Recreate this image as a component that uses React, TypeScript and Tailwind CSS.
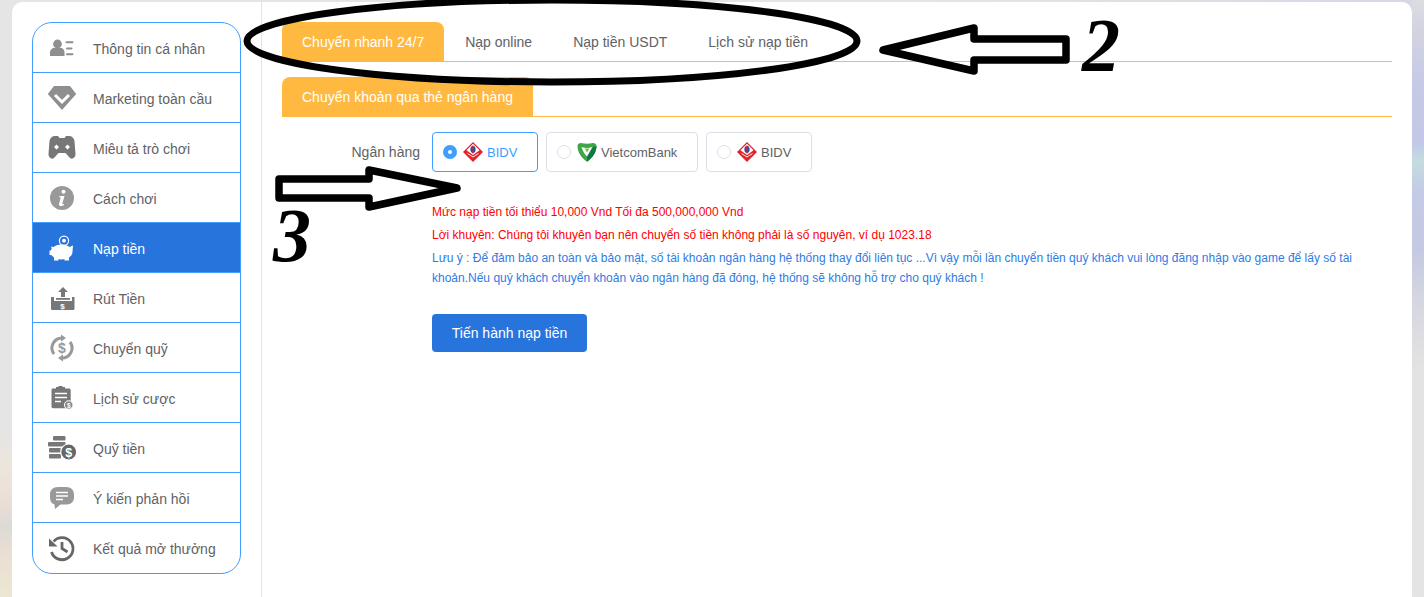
import React from 'react';

const menu = [
  { label: 'Thông tin cá nhân', icon: UserListIcon },
  { label: 'Marketing toàn cầu', icon: DiamondIcon },
  { label: 'Miêu tả trò chơi', icon: GamepadIcon },
  { label: 'Cách chơi', icon: InfoIcon },
  { label: 'Nạp tiền', icon: PiggyIcon, active: true },
  { label: 'Rút Tiền', icon: WithdrawIcon },
  { label: 'Chuyển quỹ', icon: TransferIcon },
  { label: 'Lịch sử cược', icon: ClipboardIcon },
  { label: 'Quỹ tiền', icon: CoinsIcon },
  { label: 'Ý kiến phản hồi', icon: ChatIcon },
  { label: 'Kết quả mở thưởng', icon: HistoryIcon },
];

const tabs = ['Chuyển nhanh 24/7', 'Nạp online', 'Nạp tiền USDT', 'Lịch sử nạp tiền'];

function UserListIcon() {
  return (
    <svg width="32" height="32" viewBox="0 0 32 32" fill="#8f8f8f">
      <circle cx="11.5" cy="12" r="4.4" />
      <path d="M4 24v-3.5c0-3 2.5-4.8 5-4.8h5c2.500 0 4.500 1.800 4.500 4.800V24z" />
      <rect x="19.500" y="9.300" width="8" height="2" rx="1" />
      <rect x="20" y="15.500" width="6.500" height="2" rx="1" />
      <rect x="20" y="21.300" width="7.500" height="2" rx="1" />
    </svg>
  );
}

function DiamondIcon() {
  return (
    <svg width="32" height="32" viewBox="0 0 32 32">
      <path d="M8 4h16l6.200 8L16 28 1.800 12z" fill="#8f8f8f" />
      <path d="M9 13l7 7 7-7" fill="none" stroke="#fff" strokeWidth="3" />
    </svg>
  );
}

function GamepadIcon() {
  return (
    <svg width="32" height="32" viewBox="0 0 32 32">
      <path
        d="M9 4h3l1.500 2h5L20 4h3c3 0 5 2 5.500 5l1 13c.2 3-3 6-5.500 4l-4.500-5h-7L8 26c-2.500 2-5.700-1-5.500-4l1-13C4 6 6 4 9 4z"
        fill="#777"
      />
      <path d="M10.500 12.500l2.500 2.500-2.500 2.500L8 15zM21.500 12.500l2.500 2.500-2.500 2.500-2.500-2.500z" fill="#fff" />
    </svg>
  );
}

function InfoIcon() {
  return (
    <svg width="32" height="32" viewBox="0 0 32 32">
      <circle cx="16" cy="16" r="12" fill="#999" />
      <circle cx="17.500" cy="9.800" r="2" fill="#fff" />
      <path d="M13.500 14h5l-2.200 7.500c-.2.700.4.900 1.800.3l-.3 1.500c-2 1.200-5.300 1.200-4.800-1.300l1.600-6c.1-.6-.3-.7-1.300-.6z" fill="#fff" />
    </svg>
  );
}

function PiggyIcon() {
  return (
    <svg width="32" height="32" viewBox="0 0 32 32" fill="#fff">
      <circle cx="18" cy="8.700" r="4.600" fill="none" stroke="#fff" strokeWidth="1.200" />
      <circle cx="18" cy="8.700" r="1.900" />
      <ellipse cx="15.500" cy="20" rx="11" ry="7.500" />
      <path d="M5 14.500l5 1-3 5zM21 16l6-2.500-.5 6zM8 24h4.500v4.500H8zM18.500 24H23v4.500h-4.500zM3.500 18.500h4v4.500h-4z" />
    </svg>
  );
}

function WithdrawIcon() {
  return (
    <svg width="32" height="32" viewBox="0 0 32 32" fill="#777">
      <path d="M17 5l5 5h-3v5h-4v-5h-3z" />
      <rect x="10" y="16" width="14" height="1.800" />
      <path d="M5 15h3v4h18v-4h2.500v11.500c0 1-.7 1.500-1.500 1.500H6.500c-.8 0-1.500-.5-1.500-1.500z" />
      <text x="16.500" y="27" textAnchor="middle" fontSize="8" fontWeight="700" fill="#fff" fontFamily="Liberation Sans, sans-serif">$</text>
    </svg>
  );
}

function TransferIcon() {
  return (
    <svg width="32" height="32" viewBox="0 0 32 32">
      <path d="M8 22A10 10 0 0 1 16 6M24 10A10 10 0 0 1 16 26" fill="none" stroke="#999" strokeWidth="3" />
      <path d="M15 2.500L20 6l-5 3.500zM17 22.500L12 26l5 3.500z" fill="#999" />
      <text x="16" y="21" textAnchor="middle" fontSize="14" fontWeight="700" fill="#999" fontFamily="Liberation Sans, sans-serif">$</text>
    </svg>
  );
}

function ClipboardIcon() {
  return (
    <svg width="32" height="32" viewBox="0 0 32 32">
      <path d="M7 6.500h3V5h2.500V4h4v1H19v1.500h4c1 0 1.700.7 1.700 1.700V24.500c0 1-.7 1.700-1.700 1.700H7c-1 0-1.500-.7-1.500-1.700V8.200c0-1 .5-1.700 1.500-1.700z" fill="#777" />
      <path d="M9 11.500h12M9 15.500h12M9 19.500h6" stroke="#fff" strokeWidth="1.600" />
      <circle cx="22.700" cy="23" r="4.300" fill="#8a8a8a" stroke="#fff" strokeWidth="1" />
      <text x="22.700" y="25.500" textAnchor="middle" fontSize="6.500" fontWeight="700" fill="#fff" fontFamily="Liberation Sans, sans-serif">$</text>
    </svg>
  );
}

function CoinsIcon() {
  return (
    <svg width="32" height="32" viewBox="0 0 32 32">
      <rect x="7" y="4" width="12.500" height="4.500" rx="1" fill="#777" />
      <rect x="2" y="10" width="17.500" height="4.500" rx="1" fill="#777" />
      <rect x="3" y="16" width="12" height="4.500" rx="1" fill="#777" />
      <rect x="3" y="22" width="12" height="4.500" rx="1" fill="#777" />
      <circle cx="22.700" cy="20" r="8" fill="#666" stroke="#fff" strokeWidth="1.200" />
      <text x="22.700" y="24.500" textAnchor="middle" fontSize="12.500" fontWeight="700" fill="#fff" fontFamily="Liberation Sans, sans-serif">$</text>
    </svg>
  );
}

function ChatIcon() {
  return (
    <svg width="32" height="32" viewBox="0 0 32 32">
      <path d="M12 5h8c5 0 8 3 8 7.500v3c0 4-3 7-7 7h-6.500L9 27l-.6-4.700C5.500 21.500 4 19 4 15.500v-3C4 8 7 5 12 5z" fill="#999" />
      <path d="M10 10.500h12M10 14h12M10 17.500h7" stroke="#fff" strokeWidth="1.500" />
    </svg>
  );
}

function HistoryIcon() {
  return (
    <svg width="32" height="32" viewBox="0 0 32 32">
      <path d="M7.700 9.500A11 11 0 1 1 5.500 20" fill="none" stroke="#666" strokeWidth="2.800" />
      <path d="M3 6.500l8.500 8H3z" fill="#666" />
      <path d="M16 10v6.500l5.500 3.500" fill="none" stroke="#666" strokeWidth="2.800" />
    </svg>
  );
}

function BidvLogo() {
  return (
    <svg width="20" height="20" viewBox="0 0 20 20">
      <path d="M10 0l10 10-10 10L0 10z" fill="#e0242a" />
      <path d="M10 1.800l6.500 6.500L10 13 3.500 8.300z" fill="#fff" />
      <path d="M4.500 11.500L10 15l5.500-3.500" fill="none" stroke="#fff" strokeWidth="0.900" />
      <ellipse cx="10" cy="7.500" rx="2.600" ry="3.400" fill="#2a4da8" />
      <rect x="9.400" y="3.500" width="1.200" height="8" fill="#e0242a" />
    </svg>
  );
}

function VcbLogo() {
  return (
    <svg width="20" height="20" viewBox="0 0 20 20">
      <path d="M.5 4C.5 2 2.500.8 5 1.200c3.500.6 6.500.6 10 0C17.500.8 19.500 2 19.500 4c0 6-4 12-9.500 15.800C4.500 16 .5 10 .5 4z" fill="#3ea548" />
      <path d="M19.500 4c0 6-4 12-9.500 15.800V14l5-8.500z" fill="#0f7a45" />
      <path d="M4.500 5c3.500 1.200 7.500 1.200 11 0L10 14.500C7.500 12 5.500 8.500 4.500 5z" fill="#fff" />
      <path d="M7.500 6.300c1.700.3 3.300.3 5 0L10 10.500z" fill="#7cc242" />
    </svg>
  );
}

function BankOption({ name, logo, checked, width }: { name: string; logo: React.ReactNode; checked?: boolean; width: string }) {
  return (
    <div
      className={`flex h-10 items-center rounded border pl-[10px] ${width} ${
        checked ? 'border-[#409eff] text-[#409eff]' : 'border-[#dcdfe6] text-[#606266]'
      }`}
    >
      {checked ? (
        <span className="flex h-[14px] w-[14px] items-center justify-center rounded-full bg-[#409eff]">
          <span className="h-1 w-1 rounded-full bg-white" />
        </span>
      ) : (
        <span className="h-[14px] w-[14px] rounded-full border border-[#dcdfe6]" />
      )}
      <span className="ml-[6px]">{logo}</span>
      <span className="ml-1 text-[13px] leading-none">{name}</span>
    </div>
  );
}

export default function App() {
  return (
    <div className="relative flex h-[597px] overflow-hidden font-['Liberation_Sans',Arial,sans-serif]">
      <div className="w-3 shrink-0 bg-[linear-gradient(180deg,#e5e5e5_0%,#e5e5e5_72%,#ece6dc_78%,#eadfd6_84%,#dcdad6_88%,#eadfd4_93%,#ece6d2_100%)]" />
      <div className="flex min-w-0 flex-1 flex-col bg-[linear-gradient(90deg,#e5e5e5_0%,#e4e4e4_70%,#d6d8e4_100%)] pt-[2px]">
        <div className="flex flex-1 rounded-t-[10px] bg-white">
          <aside className="h-full w-[250px] shrink-0 border-r border-[#e4e4e4] pl-5 pt-5">
            <ul className="w-[209px] overflow-hidden rounded-[20px] border border-[#409eff]">
              {menu.map((item, i) => {
                const Icon = item.icon;
                return (
                  <li
                    key={item.label}
                    className={`flex h-[50px] items-center pl-[13px] text-sm ${i < menu.length - 1 ? 'border-b border-[#409eff]' : ''} ${
                      item.active ? 'bg-[#2874dd] text-white' : 'text-[#606266]'
                    }`}
                  >
                    <Icon />
                    <span className="ml-[15px] mt-[2px]">{item.label}</span>
                  </li>
                );
              })}
            </ul>
          </aside>

          <main className="min-w-0 flex-1 pl-5 pr-5 pt-5">
            <div className="flex h-10 gap-px border-b border-[#ffb941]">
              {tabs.map((tab, i) => (
                <div
                  key={tab}
                  className={`flex h-[39px] items-center rounded-t-lg px-5 text-sm ${
                    i === 0 ? 'bg-[#ffb941] text-white' : 'text-[#606266]'
                  }`}
                >
                  {tab}
                </div>
              ))}
            </div>

            <div className="mt-[15px] flex h-10 border-b border-[#ffb941]">
              <div className="flex h-[39px] items-center rounded-t-lg bg-[#ffb941] px-5 text-sm text-white">
                Chuyển khoản qua thẻ ngân hàng
              </div>
            </div>

            <div className="mt-[15px] flex items-center">
              <span className="w-[138px] text-right text-sm text-[#606266]">Ngân hàng</span>
              <div className="ml-3 flex gap-2">
                <BankOption name="BIDV" logo={<BidvLogo />} checked width="w-[106px]" />
                <BankOption name="VietcomBank" logo={<VcbLogo />} width="w-[152px]" />
                <BankOption name="BIDV" logo={<BidvLogo />} width="w-[106px]" />
              </div>
            </div>

            <div className="ml-[150px] mt-[30px] text-xs leading-5">
              <p className="text-[#ff0000]">Mức nạp tiền tối thiểu 10,000 Vnd Tối đa 500,000,000 Vnd</p>
              <p className="mt-[3px] text-[#ff0000]">Lời khuyên: Chúng tôi khuyên bạn nên chuyển số tiền không phải là số nguyên, ví dụ 1023.18</p>
              <p className="mt-[3px] text-[#2f7be4]">
                Lưu ý : Để đảm bảo an toàn và bảo mật, số tài khoản ngân hàng hệ thống thay đổi liên tục ...Vì vậy mỗi lần chuyển tiền quý khách vui lòng đăng nhập vào game để lấy số tài khoản.Nếu quý khách chuyển khoản vào ngân hàng đã đóng, hệ thống sẽ không hỗ trợ cho quý khách !
              </p>
              <button className="mt-[26px] flex h-[38px] w-[155px] items-center justify-center rounded bg-[#2874dd] text-sm text-white">
                Tiến hành nạp tiền
              </button>
            </div>
          </main>
        </div>
      </div>
      <div className="w-3 shrink-0 bg-[linear-gradient(180deg,#dcdce2_0%,#d2d2e0_6%,#c6cae6_14%,#c2c8e6_24%,#c4dce0_27%,#c4cbe6_32%,#c6c9e2_42%,#d4d6e0_50%,#dddde0_56%,#e3e3e3_62%,#e4e4e4_100%)]" />

      {/* hand drawn marks on top of the screenshot */}
      <svg className="pointer-events-none absolute left-0 top-0" width="1424" height="597" viewBox="0 0 1424 597">
        <ellipse cx="552" cy="41" rx="305" ry="41" fill="none" stroke="#000" strokeWidth="7" />
        <path d="M883 50l91-22v11h92v21h-92v11z" fill="none" stroke="#000" strokeWidth="7.500" strokeLinejoin="round" />
        <path d="M457 188l-88-18v9h-90v19h90v9z" fill="none" stroke="#000" strokeWidth="7.500" strokeLinejoin="round" />
      </svg>
      <span className="absolute left-[1082px] top-[0px] font-['Liberation_Serif',serif] text-[76px] font-bold italic leading-[90px] text-black">2</span>
      <span className="absolute left-[273px] top-[190px] font-['Liberation_Serif',serif] text-[76px] font-bold italic leading-[90px] text-black">3</span>
    </div>
  );
}
